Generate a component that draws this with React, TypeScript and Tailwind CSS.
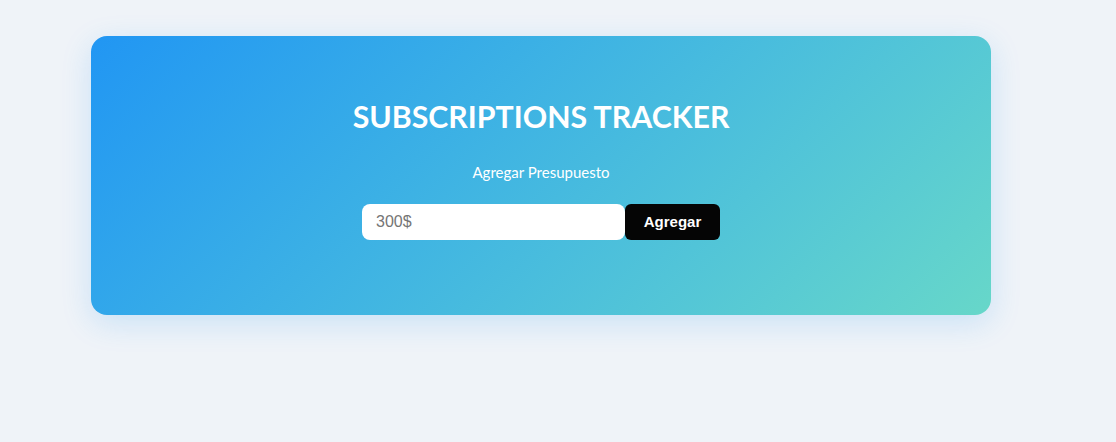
export default function App() {
  return (
    <div className="min-h-[442px] w-full bg-[#eff3f8] pt-[36px] pl-[91px]">
      <div className="flex h-[279px] w-[900px] flex-col items-center rounded-[16px] bg-linear-135 from-[#2196f3] to-[#67d7c9] pt-[62px] shadow-[0_8px_30px_rgba(33,150,243,0.18)]">
        <h1 className="font-['Lato',sans-serif] text-[30.3px] leading-[36px] font-bold text-white">
          SUBSCRIPTIONS TRACKER
        </h1>
        <p className="mt-[29px] font-['Lato',sans-serif] text-[15px] leading-[18px] text-white">
          Agregar Presupuesto
        </p>
        <div className="mt-[23px] flex h-[36px]">
          <input
            className="h-[36px] w-[263px] rounded-[8px] bg-white px-[14px] font-['Liberation_Sans',Arial,sans-serif] text-[16px] text-[#333] outline-none placeholder:text-[#757575]"
            placeholder="300$"
          />
          <button className="h-[36px] w-[95px] rounded-[6px] bg-[#050505] font-['Liberation_Sans',Arial,sans-serif] text-[15px] font-bold text-white">
            Agregar
          </button>
        </div>
      </div>
    </div>
  );
}
